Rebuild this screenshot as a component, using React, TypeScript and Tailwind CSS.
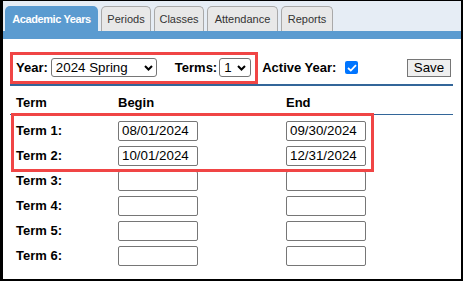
import React from 'react'

const tabs = [
  { label: 'Academic Years', width: 'w-[93px]', active: true },
  { label: 'Periods', width: 'w-[50px]', active: false },
  { label: 'Classes', width: 'w-[50px]', active: false },
  { label: 'Attendance', width: 'w-[71px]', active: false },
  { label: 'Reports', width: 'w-[52px]', active: false },
]

const terms = [
  { name: 'Term 1:', begin: '08/01/2024', end: '09/30/2024' },
  { name: 'Term 2:', begin: '10/01/2024', end: '12/31/2024' },
  { name: 'Term 3:', begin: '', end: '' },
  { name: 'Term 4:', begin: '', end: '' },
  { name: 'Term 5:', begin: '', end: '' },
  { name: 'Term 6:', begin: '', end: '' },
]

function Chevron() {
  return (
    <svg width="9" height="6" viewBox="0 0 9 6" fill="none">
      <path d="M1 1L4.5 4.5L8 1" stroke="#000" strokeWidth="2" />
    </svg>
  )
}

function SelectBox({ value, className }: { value: string; className: string }) {
  return (
    <div
      className={`h-[19px] flex items-center justify-between border border-[#767676] rounded-[3px] bg-white pl-[4px] text-[13.33px] leading-none ${className}`}
    >
      <span>{value}</span>
      <Chevron />
    </div>
  )
}

function DateInput({ value }: { value: string }) {
  return (
    <div className="w-[80px] h-[20px] border border-[#767676] rounded-[2px] bg-white pl-[3px] flex items-center text-[13.33px] leading-none">
      {value}
    </div>
  )
}

export default function App() {
  return (
    <div className="relative w-[463px] h-[281px] overflow-hidden bg-white text-black border-black border-t border-l-[3px] border-r-2 border-b-2 font-['Liberation_Sans',Arial,sans-serif]">
      {/* tabs */}
      <div className="h-[30px] bg-[#e6edf5] flex items-end gap-[3px] pl-[2px]">
        {tabs.map((t) => (
          <div
            key={t.label}
            className={`${t.width} h-[25px] pt-[1px] flex items-center justify-center rounded-t-[5px] text-[11px] ${
              t.active
                ? 'bg-[#5b9bd0] text-white font-bold tracking-[-0.4px]'
                : 'bg-[#e8e8e8] text-[#333] border border-b-0 border-[#a9a9a9]'
            }`}
          >
            {t.label}
          </div>
        ))}
      </div>
      <div className="h-[8px] bg-[#5b9bd0]" />

      <div className="ml-[7px] mr-[8px]">
        {/* year row */}
        <div className="mt-[18px] pb-[6px] border-b-2 border-[#336699]">
          <div className="h-[21px] pl-[6px] flex items-center text-[13px]">
            <span className="font-bold">Year:</span>
            <SelectBox value="2024 Spring" className="ml-[3px] w-[106px] pr-[3px]" />
            <span className="font-bold ml-[18px]">Terms:</span>
            <SelectBox value="1" className="ml-[2px] w-[32px] pr-[4px]" />
            <span className="font-bold ml-[11px]">Active Year:</span>
            <div className="ml-[9px] w-[13px] h-[13px] rounded-[2px] bg-[#0075ff] flex items-center justify-center">
              <svg width="10" height="8" viewBox="0 0 10 8" fill="none">
                <path d="M1 4L3.8 6.6L9 1.2" stroke="#fff" strokeWidth="1.8" />
              </svg>
            </div>
            <button className="ml-auto mr-[2px] w-[44px] h-[18px] border border-[#767676] bg-[#efefef] text-[13.33px] leading-none">
              Save
            </button>
          </div>
        </div>

        {/* header */}
        <div className="pt-[9px] pb-[4px] pl-[6px] border-b border-[#336699] grid grid-cols-[102px_168px_1fr] text-[13px] leading-[15px] font-bold">
          <span>Term</span>
          <span>Begin</span>
          <span>End</span>
        </div>

        {/* term rows */}
        <div className="mt-[6px] pl-[6px] flex flex-col gap-[5px]">
          {terms.map((t) => (
            <div key={t.name} className="grid grid-cols-[102px_168px_1fr] items-center h-[20px]">
              <span className="text-[13px] font-bold">{t.name}</span>
              <DateInput value={t.begin} />
              <DateInput value={t.end} />
            </div>
          ))}
        </div>
      </div>

      {/* red annotation boxes */}
      <div className="absolute left-[7px] top-[51px] w-[248px] h-[32px] border-[3px] border-[#f04545]" />
      <div className="absolute left-[8px] top-[112px] w-[363px] h-[59px] border-[3px] border-[#f04545]" />
    </div>
  )
}
